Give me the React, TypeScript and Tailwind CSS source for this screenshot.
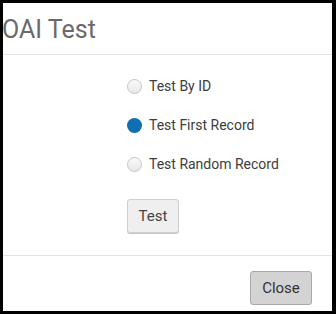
import { useState } from "react";

const options = ["Test By ID", "Test First Record", "Test Random Record"];

export default function App() {
  const [selected, setSelected] = useState("Test First Record");

  return (
    <div className="flex h-[314px] w-[336px] bg-black pb-[3px] pl-[3px] pr-[4px] pt-[3px] font-['Roboto','Liberation_Sans',sans-serif]">
      <div className="flex flex-1 flex-col overflow-hidden bg-white">
        <div className="flex h-[52px] items-center border-b border-[#e3e3e3]">
          <h1 className="-ml-[1px] mt-[1px] text-[25px] leading-none text-[#6a6a6a]">OAI Test</h1>
        </div>

        <div className="flex h-[201px] flex-col border-b border-[#e3e3e3] pl-[124px] pt-[21px]">
          <div className="flex flex-col gap-[19px]">
            {options.map((opt) => {
              const on = opt === selected;
              return (
                <label
                  key={opt}
                  className="flex h-5 cursor-pointer items-center gap-[7px] text-[14px] text-[#3d3d3d]"
                  onClick={() => setSelected(opt)}
                >
                  {on ? (
                    <span className="h-[15px] w-[15px] rounded-full bg-[#0f6fb0]" />
                  ) : (
                    <span className="h-[15px] w-[15px] rounded-full border border-[#c4c4c4] bg-gradient-to-b from-[#fafafa] to-[#e8e8e8]" />
                  )}
                  {opt}
                </label>
              );
            })}
          </div>
          <button className="mt-[25px] h-[34px] w-[52px] rounded-[3px] border border-[#cfcfcf] bg-[#efefef] text-[15px] text-[#444] shadow-[0_1px_0_#c8c8c8]">
            Test
          </button>
        </div>

        <div className="flex justify-end pr-[20px] pt-[15px]">
          <button className="h-[34px] w-[62px] rounded-[3px] border border-[#a9a9a9] bg-[#d3d3d3] text-[15px] text-[#333]">
            Close
          </button>
        </div>
      </div>
    </div>
  );
}
